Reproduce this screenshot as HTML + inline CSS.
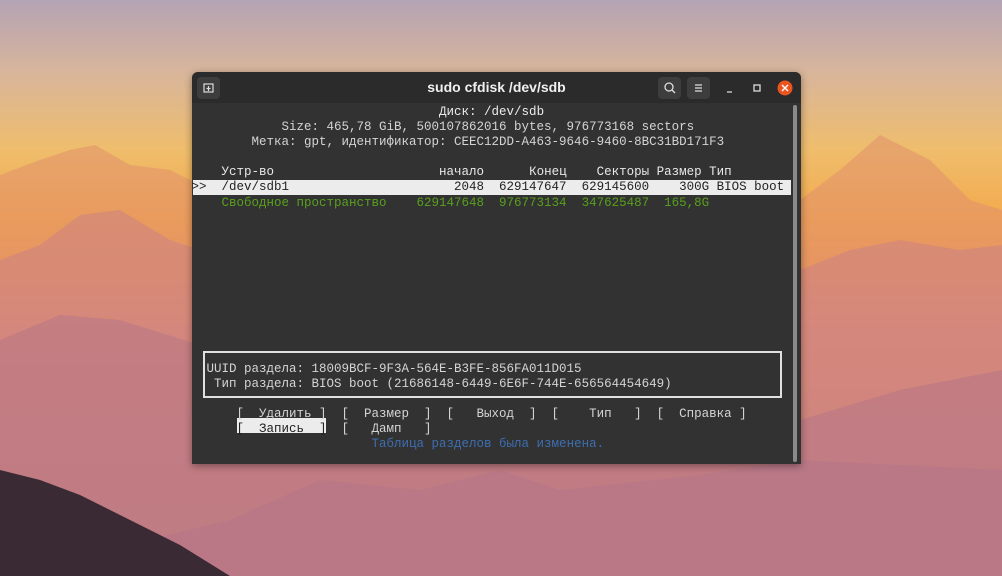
<!DOCTYPE html>
<html><head><meta charset="utf-8"><style>
html,body{margin:0;padding:0;width:1002px;height:576px;overflow:hidden;}
body{position:relative;background:linear-gradient(#b4a3b4 0px,#d7b59c 70px,#efbd6c 150px,#f4a94c 220px,#ee9a58 270px,#d98a82 330px,#c07b8c 420px,#a8708e 576px);}
svg.bg{position:absolute;left:0;top:0;}
.win{position:absolute;left:192px;top:72px;width:609px;height:392px;background:#323232;border-radius:6px 6px 0 0;box-shadow:0 2px 8px rgba(0,0,0,.4);overflow:hidden;}
.tb{position:absolute;left:0;top:0;width:609px;height:31px;background:#2b2b2b;}
.title{position:absolute;left:0;width:609px;top:7px;text-align:center;color:#f0f0f0;font:bold 14px "Liberation Sans",sans-serif;}
.ib{position:absolute;top:5px;width:23px;height:22px;background:#3d3d3d;border-radius:4px;}
pre{position:absolute;margin:0;font:12.5px/15.1px "Liberation Mono","DejaVu Sans Mono",monospace;color:#d4d4d4;white-space:pre;}
.g{color:#58a01c}.b{color:#3d6eb0}
</style></head><body>
<svg class="bg" width="1002" height="576">
<polygon points="0,175 40,160 70,150 95,145 130,165 170,170 200,185 500,200 800,200 840,170 880,135 900,145 930,160 970,200 1002,210 1002,576 0,576" fill="#e08f6b" opacity=".55"/>
<polygon points="0,260 40,245 80,215 120,210 170,240 200,250 500,260 800,270 850,250 900,240 960,250 1002,245 1002,576 0,576" fill="#cf8480" opacity=".6"/>
<polygon points="0,340 60,315 120,320 200,345 500,400 800,420 900,390 1002,370 1002,576 0,576" fill="#b27389" opacity=".45"/>
<polygon points="0,576 230,520 320,480 420,490 500,470 560,490 700,475 800,460 1002,470 1002,576" fill="#b07390" opacity=".35"/>
<polygon points="0,470 40,480 80,495 130,520 180,545 230,576 0,576" fill="#3a2a33"/>
</svg>
<div class="win">
<div class="tb">
<div class="ib" style="left:5px"><svg width="23" height="22"><rect x="7" y="7" width="9" height="8" fill="none" stroke="#ddd" stroke-width="1.2"/><path d="M11.5 9v5M9.5 11.5h4" stroke="#ddd" stroke-width="1.2"/></svg></div>
<div class="title">sudo cfdisk /dev/sdb</div>
<div class="ib" style="left:466px"><svg width="23" height="22"><circle cx="11" cy="10" r="4" fill="none" stroke="#ddd" stroke-width="1.3"/><path d="M14 13l3 3" stroke="#ddd" stroke-width="1.3"/></svg></div>
<div class="ib" style="left:495px"><svg width="23" height="22"><path d="M8 8h7M8 11h7M8 14h7" stroke="#ddd" stroke-width="1.2"/></svg></div>
<svg style="position:absolute;left:528px;top:5px" width="80" height="22"><path d="M7 15h5" stroke="#ddd" stroke-width="1.3"/><rect x="34" y="8" width="6" height="6" fill="none" stroke="#ddd" stroke-width="1.3"/><circle cx="65" cy="11" r="7.5" fill="#e95420"/><path d="M62 8l6 6M68 8l-6 6" stroke="#fff" stroke-width="1.4"/></svg>
</div>
<div style="position:absolute;left:601px;top:33px;width:4px;height:357px;background:#8a8a8a;border-radius:2px"></div>
<div style="position:absolute;left:1px;top:108px;width:598px;height:15px;background:#ececec"></div>
<div style="position:absolute;left:11px;top:279px;width:575px;height:43px;border:2px solid #e0e0e0"></div>
<div style="position:absolute;left:45px;top:346px;width:89px;height:15px;background:#ececec"></div>
<pre style="left:-0.5px;top:33px">                                 <span style="color:#ececec">Диск: /dev/sdb</span>
            Size: 465,78 GiB, 500107862016 bytes, 976773168 sectors
        Метка: gpt, идентификатор: CEEC12DD-A463-9646-9460-8BC31BD171F3

    <span style="color:#e8e8e8">Устр-во                      начало      Конец    Секторы Размер Тип</span>
<span style="color:#222">&gt;&gt;  /dev/sdb1                      2048  629147647  629145600    300G BIOS boot</span>
<span class="g">    Свободное пространство    629147648  976773134  347625487  165,8G</span>










  UUID раздела: 18009BCF-9F3A-564E-B3FE-856FA011D015
   Тип раздела: BIOS boot (21686148-6449-6E6F-744E-656564454649)

      [  Удалить ]  [  Размер  ]  [   Выход  ]  [    Тип   ]  [  Справка ]
      <span style="color:#222">[  Запись  ]</span>  [   Дамп   ]
                        <span class="b">Таблица разделов была изменена.</span></pre>
</div>
</body></html>
